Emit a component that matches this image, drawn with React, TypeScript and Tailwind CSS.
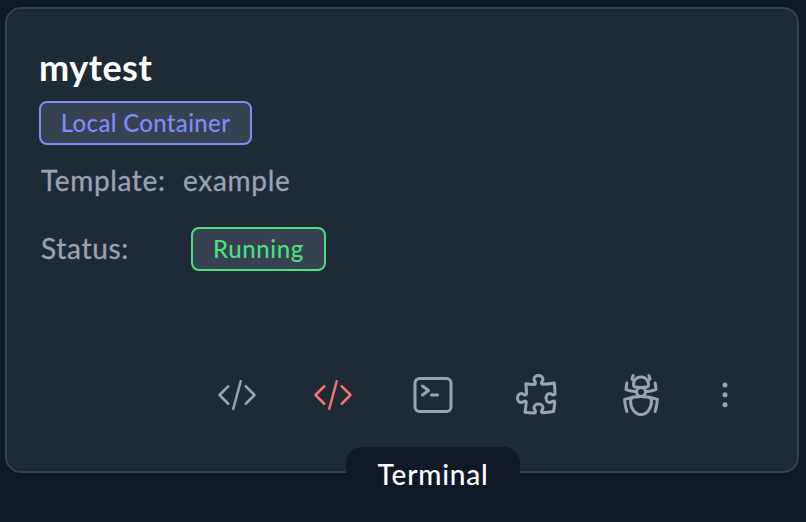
import {
  HiOutlineBugAnt,
  HiOutlineCodeBracket,
  HiOutlineCommandLine,
  HiOutlinePuzzlePiece,
} from "react-icons/hi2";

function Badge({ className, children }: { className: string; children: string }) {
  return (
    <span
      className={`flex h-11 items-center justify-center rounded-lg border-2 bg-[#374151] text-2xl font-medium whitespace-nowrap ${className}`}
    >
      {children}
    </span>
  );
}

export default function App() {
  return (
    <main className="h-[522px] w-[806px] overflow-hidden bg-[#111827] pt-[7px] pl-[5px] font-[Lato,'Open_Sans',sans-serif] text-[#9ca3af]">
      <section className="relative flex h-[466px] w-[794px] flex-col rounded-2xl border-2 border-[#374151] bg-[#1f2a37] pt-[38px] pl-8">
        <h1 className="h-10 text-[36px] leading-10 font-bold tracking-[0.5px] text-white">mytest</h1>
        <div className="mt-3.5 flex">
          <Badge className="w-[213px] border-[#818cf8] tracking-[0.33px] text-[#818cf8]">Local Container</Badge>
        </div>
        <div className="mt-[15px] ml-0.5 flex h-10 items-center gap-[18px] text-[28px] leading-10 [-webkit-text-stroke:0.3px]">
          <span className="w-[124px] tracking-[0.65px]">Template:</span>
          <span className="tracking-[0.7px]">example</span>
        </div>
        <div className="mt-[27px] ml-0.5 flex h-11 items-center text-[28px]">
          <span className="w-[150px] pb-0.5 tracking-[0.7px] [-webkit-text-stroke:0.3px]">Status:</span>
          <Badge className="w-[135px] border-[#4ade80] tracking-[0.6px] text-[#4ade80]">Running</Badge>
        </div>
        <div className="mt-[100px] ml-[178px] flex h-12 items-center">
          <HiOutlineCodeBracket className="size-10" />
          <HiOutlineCodeBracket className="ml-14 size-10 text-[#f87171]" />
          <HiOutlineCommandLine className="ml-14 size-12" />
          <HiOutlinePuzzlePiece className="ml-14 size-12" />
          <HiOutlineBugAnt className="ml-14 size-12" />
          <svg className="ml-[50px] h-8 w-5" viewBox="0 0 20 32" fill="currentColor">
            <circle cx="10" cy="6" r="2.5" />
            <circle cx="10" cy="15.8" r="2.5" />
            <circle cx="10" cy="25.7" r="2.5" />
          </svg>
        </div>
        <div className="absolute top-[438px] left-[339px] flex h-[60px] w-[174px] items-center justify-center rounded-2xl bg-[#111827] pb-1.5 text-[28px] font-medium tracking-[0.8px] text-white">
          Terminal
        </div>
      </section>
    </main>
  );
}
